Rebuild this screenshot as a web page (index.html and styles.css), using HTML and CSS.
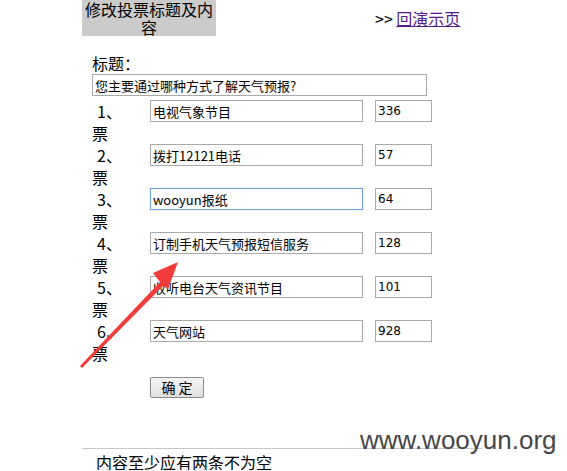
FILE: index.html
```html
<!DOCTYPE html>
<html lang="zh">
<head>
<meta charset="utf-8">
<link rel="stylesheet" href="styles.css">
</head>
<body>
<div class="page">
  <div class="top">
    <div class="title-box">修改投票标题及内容</div>
    <div class="back">&gt;&gt; <a href="#">回演示页</a></div>
  </div>
  <form class="vote">
    <div class="label">标题：</div>
    <input class="title-input" type="text" value="您主要通过哪种方式了解天气预报?">
    <div class="items">
      <div class="item">
        <div class="line"><span class="num">1、</span><input class="name" value="电视气象节目"><input class="count" value="336"></div>
        <div class="unit">票</div>
      </div>
      <div class="item">
        <div class="line"><span class="num">2、</span><input class="name" value="拨打12121电话"><input class="count" value="57"></div>
        <div class="unit">票</div>
      </div>
      <div class="item">
        <div class="line"><span class="num">3、</span><input class="name focus" value="wooyun报纸"><input class="count" value="64"></div>
        <div class="unit">票</div>
      </div>
      <div class="item">
        <div class="line"><span class="num">4、</span><input class="name" value="订制手机天气预报短信服务"><input class="count" value="128"></div>
        <div class="unit">票</div>
      </div>
      <div class="item">
        <div class="line"><span class="num">5、</span><input class="name" value="收听电台天气资讯节目"><input class="count" value="101"></div>
        <div class="unit">票</div>
      </div>
      <div class="item">
        <div class="line"><span class="num">6、</span><input class="name" value="天气网站"><input class="count" value="928"></div>
        <div class="unit">票</div>
      </div>
    </div>
    <div class="actions"><button type="button" class="btn">确 定</button></div>
  </form>
  <div class="rule"></div>
  <div class="note">内容至少应有两条不为空</div>
</div>
<div class="watermark">www.wooyun.org</div>
<svg class="arrow" width="567" height="471" viewBox="0 0 567 471">
  <polygon points="80,366 160,282 153,273 178,262 168,289 163,286 82,368" fill="#f23c3c"/>
</svg>
</body>
</html>
```

FILE: styles.css
```css
html, body {
  margin: 0;
  padding: 0;
  background: #fff;
}
body {
  position: relative;
  font-family: "Noto Sans CJK SC", "Liberation Sans", sans-serif;
  font-size: 16px;
  color: #000;
}
.page {
  margin-left: 82px;
  width: 420px;
}
.top {
  display: flex;
  align-items: flex-start;
}
.title-box {
  width: 134px;
  min-height: 36px;
  background: #cbcbcb;
  text-align: center;
  line-height: 18px;
  font-size: 16px;
}
.back {
  margin-left: 159px;
  line-height: 36px;
  font-size: 16px;
}
.back a {
  color: #551a8b;
  text-decoration: underline;
}
.vote {
  margin: 0;
  padding-left: 10px;
}
.label {
  margin-top: 18px;
  line-height: 18px;
  height: 18px;
}
.title-input {
  display: block;
  margin-top: 2px;
  width: 335px;
  height: 22px;
}
input {
  box-sizing: border-box;
  border: 1px solid #a9a9a9;
  padding: 0 2px;
  margin: 0;
  font-family: "Noto Sans CJK SC", sans-serif;
  font-size: 13px;
  color: #000;
  background: #fff;
  outline: none;
}
.items {
  margin-top: 4px;
}
.item {
  display: flex;
  flex-direction: column;
}
.line {
  display: flex;
  align-items: center;
  height: 22px;
}
.num {
  width: 58px;
  padding-left: 5px;
  box-sizing: border-box;
  line-height: 22px;
}
.name {
  width: 213px;
  height: 22px;
}
.name.focus {
  border-color: #6f9fdc;
  box-shadow: 0 0 1px #9cc0ee;
}
.count {
  margin-left: 12px;
  width: 57px;
  height: 22px;
  font-family: "DejaVu Sans", "Liberation Sans", sans-serif;
  font-size: 12px;
}
.unit {
  height: 22px;
  line-height: 22px;
}
.actions {
  display: flex;
  margin-top: 13px;
  padding-left: 58px;
}
.btn {
  width: 54px;
  height: 21px;
  padding: 0;
  border: 1px solid #8a8a8a;
  border-radius: 2px;
  background: linear-gradient(#f6f6f6, #dedede);
  font-family: "Noto Sans CJK SC", sans-serif;
  font-size: 14px;
  line-height: 19px;
  color: #000;
}
.rule {
  margin-top: 50px;
  height: 1px;
  background: #c8c8c8;
  width: 400px;
}
.note {
  margin-top: 6px;
  padding-left: 14px;
  line-height: 15px;
}
.watermark {
  position: absolute;
  left: 360px;
  top: 425px;
  font-family: "Liberation Sans", sans-serif;
  font-size: 26px;
  color: #464646;
  line-height: 30px;
}
.arrow {
  position: absolute;
  left: 0;
  top: 0;
  pointer-events: none;
}
```
